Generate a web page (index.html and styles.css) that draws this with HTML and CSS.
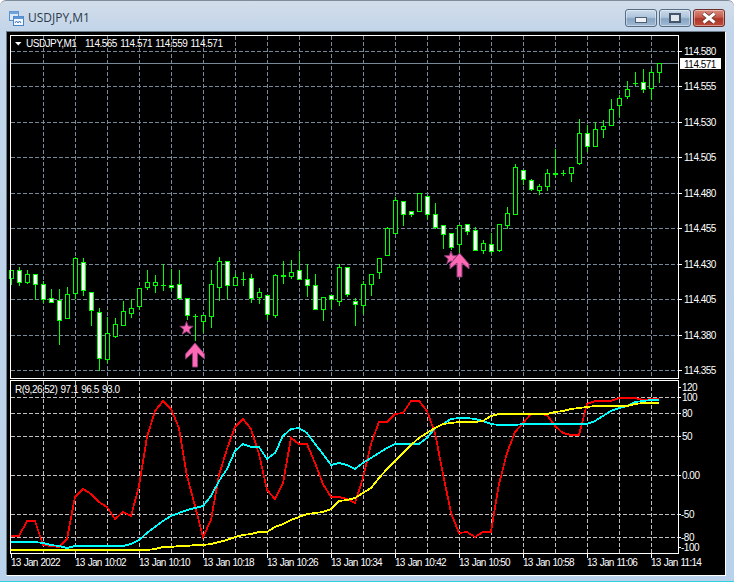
FILE: index.html
```html
<!DOCTYPE html>
<html lang="en">
<head>
    <meta charset="UTF-8">
    <title>USDJPY,M1</title>
    <link rel="stylesheet" href="styles.css">
</head>
<body>
    <div class="window">
        <div class="titlebar">
            <svg class="app-icon" width="15" height="15" viewBox="0 0 15 15">
                <rect x="0.5" y="0.5" width="9" height="9" fill="#dbe9f8" stroke="#5b8fc9"/>
                <rect x="0.5" y="0.5" width="9" height="2.5" fill="#6fa3dc"/>
                <rect x="4.5" y="5.5" width="10" height="9" fill="#f4f9ff" stroke="#4a82c4"/>
                <rect x="4.5" y="5.5" width="10" height="2.5" fill="#5f97d6"/>
                <path d="M6 12l1.5-2 1.5 2 1.5-2 1.5 2" fill="none" stroke="#3c74b8"/>
            </svg>
            <span class="title">USDJPY,M1</span>
            <div class="controls">
                <div class="ctl">
                    <svg class="ctl-min" width="12" height="6" viewBox="0 0 12 6"><rect x="0.5" y="0.5" width="11" height="5" fill="#eef2f6" stroke="#4f5f70"/></svg>
                </div>
                <div class="ctl">
                    <svg width="12" height="10" viewBox="0 0 12 10"><rect x="1" y="1" width="10" height="8" fill="#dfe7ef" stroke="#46556a" stroke-width="2"/></svg>
                </div>
                <div class="ctl ctl-close">
                    <svg width="18" height="12" viewBox="0 0 18 12"><path d="M3.5 1.5l11 9M14.5 1.5l-11 9" stroke="#5a2a26" stroke-width="4.4"/><path d="M3.5 1.5l11 9M14.5 1.5l-11 9" stroke="#fff" stroke-width="3"/></svg>
                </div>
            </div>
        </div>
        <div class="client">
            <svg id="chart" class="chart" width="718" height="543" viewBox="7 31 718 543"></svg>
        </div>
    </div>
    <script src="chart.js"></script>
</body>
</html>
```

FILE: styles.css
```css
html, body {
    margin: 0;
    padding: 0;
    background-color: #fff;
}
body {
    width: 736px;
    height: 582px;
    overflow: hidden;
}
.window {
    box-sizing: border-box;
    width: 734px;
    height: 582px;
    padding: 0 8px 6px 6px;
    background: linear-gradient(to bottom, #d3dde9 0, #c2d5ea 30px, #b9d1ea 100%);
    border-top: 1px solid #7f8c99;
    border-bottom: 1px solid #2fd0e0;
    border-radius: 6px 6px 0 0;
}
.titlebar {
    display: flex;
    align-items: flex-start;
    height: 30px;
}
.app-icon {
    margin: 10px 0 0 3px;
}
.title {
    margin: 9px 0 0 4px;
    font-family: "Open Sans", sans-serif;
    font-size: 12px;
    line-height: 16px;
    color: #2b3a4a;
}
.controls {
    display: flex;
    gap: 2px;
    margin: 8px 1px 0 auto;
}
.ctl {
    box-sizing: border-box;
    display: flex;
    align-items: center;
    justify-content: center;
    width: 32px;
    height: 18px;
    border: 1px solid #566c82;
    border-radius: 3px;
    background: linear-gradient(to bottom, #cbdaea 0, #aec5dc 45%, #86a4c2 55%, #a0bad4 100%);
    box-shadow: inset 0 0 0 1px rgba(255,255,255,0.4);
}
.ctl-min {
    margin-top: 3px;
}
.ctl-close {
    border-color: #6b2e2a;
    background: linear-gradient(to bottom, #d98d80 0, #c75a4b 45%, #ac3628 55%, #bf4c3a 100%);
}
.client {
    width: 720px;
    height: 545px;
    box-sizing: border-box;
    border-left: 1px solid #6e7b88;
    border-top: 1px solid #6e7b88;
    border-right: 1px solid #fff;
    border-bottom: 2px solid #fff;
    background-color: #000;
}
.chart {
    display: block;
    background-color: #000;
}
.crisp { shape-rendering: crispEdges; }
.grid-main {
    stroke: #778899;
    stroke-dasharray: 4 2;
    fill: none;
}
.grid-sub {
    stroke: #c0c0c0;
    stroke-dasharray: 4 2;
    fill: none;
}
.bid-line { stroke: #778899; }
.frame {
    stroke: #fff;
    fill: none;
}
.tick { stroke: #fff; }
.wick { stroke: #00ff00; }
.body-up {
    stroke: #00ff00;
    fill: #000;
}
.body-down {
    stroke: #00ff00;
    fill: #fff;
}
.line {
    fill: none;
    stroke-width: 1.8;
    shape-rendering: crispEdges;
}
.line-red { stroke: #ff0000; }
.line-cyan { stroke: #00ffff; }
.line-yellow { stroke: #ffff00; }
.mark {
    fill: #ff69b4;
    stroke: #8a3a78;
    stroke-width: 1;
}
.label {
    font-family: "Liberation Sans", sans-serif;
    font-size: 10px;
    letter-spacing: -0.5px;
    word-spacing: 1px;
    fill: #fff;
}
.label-time {
    letter-spacing: -0.75px;
    word-spacing: 1px;
}
.label-bid { fill: #000; }
.bid-box { fill: #fff; }
.menu-arrow { fill: #fff; }
```

FILE: chart.js
```js
const svg = document.getElementById('chart');
const NS = 'http://www.w3.org/2000/svg';

function add(tag, attrs, text) {
    const el = document.createElementNS(NS, tag);
    for (const k in attrs) el.setAttribute(k, attrs[k]);
    if (text) el.textContent = text;
    svg.appendChild(el);
    return el;
}

function hline(y, x1, x2, cls) {
    add('line', { x1: x1, x2: x2, y1: y + 0.5, y2: y + 0.5, class: cls + ' crisp' });
}

function vline(x, y1, y2, cls) {
    add('line', { x1: x + 0.5, x2: x + 0.5, y1: y1, y2: y2, class: cls + ' crisp' });
}

function label(x, y, text, cls) {
    add('text', { x: x, y: y, class: 'label ' + (cls || '') }, text);
}

// Grid
const priceRows = [
    [50, '114.580'], [85, '114.555'], [121, '114.530'], [156, '114.505'], [192, '114.480'],
    [227, '114.455'], [263, '114.430'], [298, '114.405'], [334, '114.380'], [369, '114.355']
];
const subRows = [[396, '100', 682], [412, '80', 682], [435, '50', 682], [474, '0.00', 682], [513, '-50', 681], [536, '-80', 681]];

for (const row of priceRows) hline(row[0], 11, 678, 'grid-main');
for (const row of subRows) hline(row[0], 11, 678, 'grid-sub');
for (let x = 43; x < 678; x += 32) {
    vline(x, 35, 377, 'grid-main');
    vline(x, 380, 552, 'grid-sub');
}

// Bid line
hline(62, 11, 678, 'bid-line');

// Candles: [body top, body bottom, wick top, wick bottom, white?]
const candles = [
    [269,277,269,283,0],[269,281,266,284,1],[273,281,269,282,0],[273,283,273,298,1],[283,298,280,301,1],
    [297,301,288,301,1],[299,319,288,343,1],[293,317,286,317,0],[257,292,256,297,0],[261,289,257,294,1],
    [291,309,291,324,1],[311,357,307,369,1],[332,358,316,361,0],[323,335,317,336,0],[310,324,300,324,0],
    [307,312,298,316,0],[287,305,287,308,0],[281,286,269,288,0],[281,284,274,291,0],[284,284,263,289,0],
    [284,286,268,289,1],[283,297,269,298,1],[297,314,297,318,1],[315,315,313,339,0],[314,320,314,331,0],
    [283,315,269,326,0],[260,286,256,299,0],[260,284,260,297,1],[276,284,273,284,0],[278,278,271,284,0],
    [277,297,273,301,1],[291,296,287,302,0],[294,313,294,318,1],[274,314,273,316,0],[274,275,260,282,1],
    [271,275,259,277,0],[269,278,250,278,1],[278,284,263,295,1],[284,308,273,308,1],[296,308,296,319,0],
    [294,298,294,307,1],[266,300,263,304,0],[266,293,266,295,1],[300,303,297,324,1],[283,304,280,312,0],
    [273,283,273,294,0],[257,271,257,277,0],[227,254,226,254,0],[199,232,196,232,0],[200,213,200,224,1],
    [210,213,210,215,1],[192,210,192,210,0],[195,213,195,217,1],[213,226,202,227,1],[224,233,224,247,1],
    [232,246,232,248,1],[224,243,224,253,0],[223,230,223,233,1],[229,249,226,249,1],[242,249,239,252,0],
    [243,250,232,252,1],[223,249,223,250,0],[212,224,206,227,0],[166,213,163,213,0],[169,178,169,183,1],
    [179,188,178,189,1],[185,189,183,193,0],[172,185,168,189,0],[172,173,148,175,1],[172,172,169,174,0],
    [166,172,166,180,0],[132,162,118,163,0],[132,145,124,150,1],[128,145,121,145,0],[125,128,119,136,0],
    [108,124,98,124,0],[97,104,94,115,0],[88,95,80,97,0],[82,82,71,84,0],[81,88,68,91,1],
    [71,87,68,98,0],[62,71,62,81,0]
];

candles.forEach((c, i) => {
    const x = 11 + i * 8;
    vline(x, c[2], c[3] + 1, 'wick');
    if (c[0] === c[1]) {
        add('line', { x1: x - 2, x2: x + 3, y1: c[0] + 0.5, y2: c[0] + 0.5, class: 'wick crisp' });
    } else {
        add('rect', {
            x: x - 1.5, y: c[0] + 0.5, width: 4, height: c[1] - c[0],
            class: (c[4] ? 'body-down' : 'body-up') + ' crisp'
        });
    }
});

// Pink signals
function star(cx, cy, r) {
    let pts = '';
    for (let i = 0; i < 10; i++) {
        const a = -Math.PI / 2 + i * Math.PI / 5;
        const d = i % 2 ? r * 0.42 : r;
        pts += (cx + d * Math.cos(a)).toFixed(1) + ',' + (cy + d * Math.sin(a)).toFixed(1) + ' ';
    }
    add('polygon', { points: pts, class: 'mark' });
}

function arrow(x, y) {
    const pts = [[0,0],[9.5,11],[9.5,16],[2.5,10],[2.5,24],[-2.5,24],[-2.5,10],[-9.5,16],[-9.5,11]];
    add('polygon', { points: pts.map(p => (x + p[0]) + ',' + (y + p[1])).join(' '), class: 'mark' });
}

star(186.5, 327.5, 7);
arrow(195, 342);
star(451, 257, 7);
arrow(459.5, 252);

// Frames
add('rect', { x: 10.5, y: 34.5, width: 668, height: 343, class: 'frame crisp' });
add('rect', { x: 10.5, y: 379.5, width: 668, height: 173, class: 'frame crisp' });

// Indicator lines, one point per bar
const red = [535,535,520,520,544,545,546,538,496,488,493,501,506,518,511,515,485,436,410,400,408,427,475,505,536,519,474,448,426,
    418,428,453,489,498,482,437,443,443,462,483,496,496,498,502,477,443,421,421,413,412,400,400,410,432,473,512,532,531,536,
    531,531,483,452,431,422,413,413,414,425,432,434,434,403,400,400,400,397,397,397,399,398,398];
const cyan = [541,541,541,541,542,544,545,547,545,545,545,545,545,545,545,543,539,532,526,520,515,512,509,507,505,495,480,468,450,
    443,446,446,458,452,435,428,427,432,443,453,464,462,464,468,462,457,452,447,443,443,443,443,437,427,423,418,417,417,418,
    420,423,424,424,424,423,423,423,423,423,423,423,423,423,420,415,410,407,405,401,400,399,399];
const yellow = [549,549,549,549,549,549,549,549,549,549,549,549,549,549,549,549,549,549,548,546,546,545,545,544,544,543,541,539,536,
    534,533,531,531,526,523,519,516,513,512,511,508,500,499,497,492,487,477,468,460,452,444,437,432,427,423,422,421,421,421,
    420,415,413,413,413,413,413,413,413,411,410,408,407,406,405,405,405,405,405,403,402,402,402];

[[red, 'line-red'], [cyan, 'line-cyan'], [yellow, 'line-yellow']].forEach(set => {
    const pts = set[0].map((y, i) => (11 + i * 8) + ',' + y).join(' ');
    add('polyline', { points: pts, class: 'line ' + set[1] });
});

// Header text
add('polygon', { points: '15,41 21.5,41 18.25,44.5', class: 'menu-arrow' });
label(26, 46, 'USDJPY,M1');
label(85, 46, '114.565 114.571 114.559 114.571');
label(15, 392, 'R(9,26,52) 97.1 96.5 93.0');

// Price axis
for (const row of priceRows) {
    hline(row[0], 679, 682, 'tick');
    label(684, row[0] + 4, row[1]);
}
add('rect', { x: 680, y: 57, width: 41, height: 11, class: 'bid-box' });
label(684, 67, '114.571', 'label-bid');

// Indicator axis
for (const row of subRows.concat([[386, '120', 682], [546, '-100', 681]])) {
    hline(row[0], 679, 681, 'tick');
    label(row[2], row[0] + 4, row[1]);
}

// Time axis
const times = ['13 Jan 2022', '13 Jan 10:02', '13 Jan 10:10', '13 Jan 10:18', '13 Jan 10:26', '13 Jan 10:34',
    '13 Jan 10:42', '13 Jan 10:50', '13 Jan 10:58', '13 Jan 11:06', '13 Jan 11:14'];
times.forEach((t, i) => {
    const x = 11 + i * 64;
    vline(x, 553, 557, 'tick');
    label(x, 565, t, 'label-time');
});
```
